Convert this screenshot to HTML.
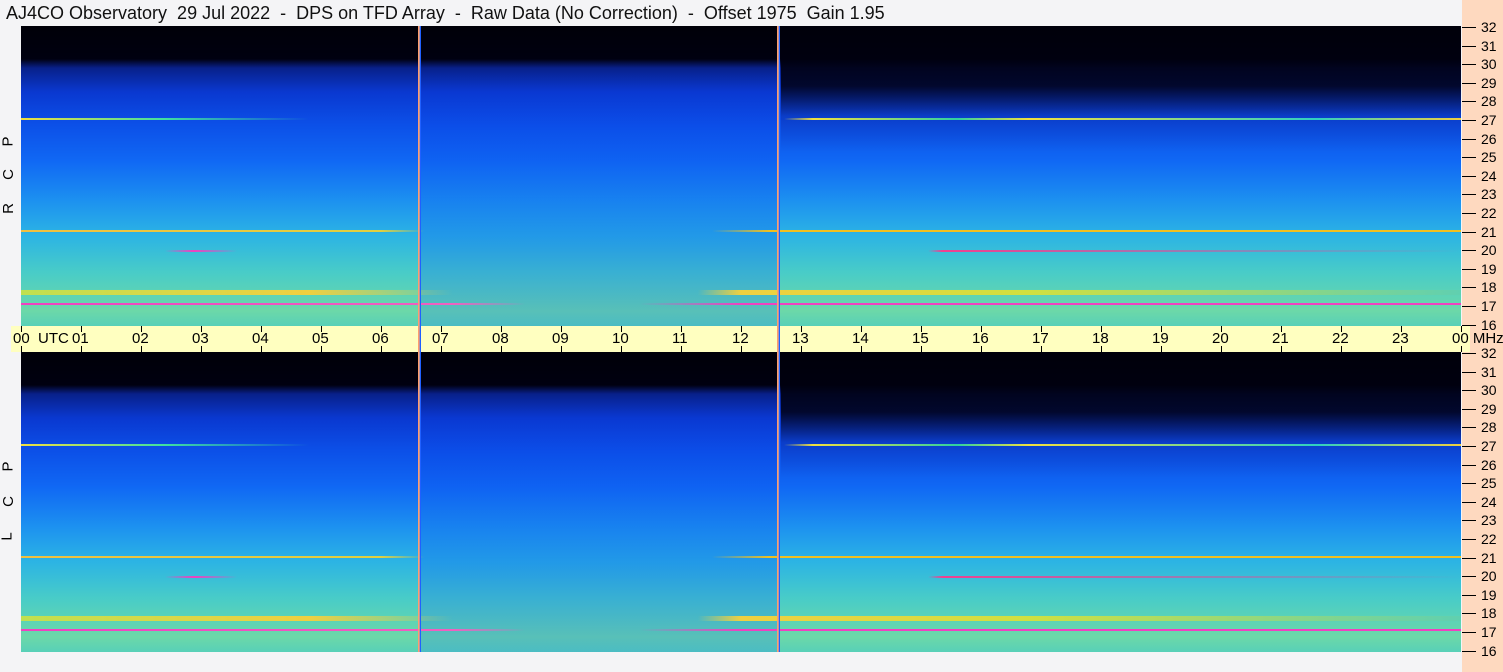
<!DOCTYPE html><html><head><style>
body{margin:0;width:1503px;height:672px;background:#f4f4f6;position:relative;overflow:hidden;font-family:"Liberation Sans",sans-serif}
.t{position:absolute;left:6px;top:3px;font-size:18px;color:#111;white-space:pre}
.pe{position:absolute;left:1462px;top:0;width:41px;height:672px;background:#fed9bf}
.p{position:absolute;left:21px;width:1440px;height:300px;overflow:hidden;
background:linear-gradient(180deg,#000008 0,#000010 11%,#08208a 14%,#0a38d0 22%,#0c50e8 33%,#1068f4 45%,#1c90f0 58%,#2cb4e4 70%,#48ccc8 82%,#6cd8a8 95%,#58d0b8 100%)}
.ov{position:absolute;top:0;height:100%}
.l{position:absolute;left:0;width:100%;height:2px}
.vl{position:absolute;top:26px;width:3px;height:626px;background:linear-gradient(90deg,#ff9060,#ffb080 40%,#2060ff 70%)}
.band{position:absolute;left:11px;top:326px;width:1459px;height:26px;background:#ffffc0}
.tk{position:absolute;font-size:15px;color:#000;top:330px;white-space:pre}
.f{position:absolute;left:1481px;font-size:14px;color:#000}
.fm{position:absolute;left:1462px;width:14px;height:1px;background:#000}
.lb{position:absolute;left:3px;font-size:15px;transform:rotate(-90deg)}
</style></head><body>
<div class="t">AJ4CO Observatory  29 Jul 2022  -  DPS on TFD Array  -  Raw Data (No Correction)  -  Offset 1975  Gain 1.95</div>
<div class="pe"></div>
<div class="p" style="top:26px">
 <div class="ov" style="left:398px;width:360px;background:linear-gradient(180deg,transparent 14%,rgba(10,60,230,.15) 30%,rgba(10,90,240,.3) 70%,rgba(20,110,240,.2) 100%)"></div>
 <div class="ov" style="left:760px;width:680px;background:linear-gradient(180deg,rgba(0,0,10,.95) 0,rgba(0,0,20,.85) 20%,rgba(10,30,140,.3) 30%,transparent 42%)"></div>
 <div class="l" style="top:92px;background:linear-gradient(90deg,#f0e040 0,#40e0a0 10%,transparent 20%,transparent 53%,#f0e040 55%,#30d0a0 65%,#f0e040 70%,#30d0c0 90%,#f0d040 100%)"></div>
 <div class="l" style="top:204px;background:linear-gradient(90deg,#f0c040 0,#e0d040 25%,transparent 28%,transparent 48%,#f0c020 52%,#f0c020 100%)"></div>
 <div class="l" style="top:224px;background:linear-gradient(90deg,transparent 10%,#f040c0 12%,transparent 15%,transparent 63%,#f04090 64%,transparent 100%)"></div>
 <div class="l" style="top:264px;height:5px;background:linear-gradient(90deg,#c0e050 0,#f0d040 20%,transparent 30%,transparent 47%,#f0d040 50%,#d0e040 70%,#60d0b0 100%)"></div>
 <div class="l" style="top:277px;background:linear-gradient(90deg,#f040c0 0,#f060c0 30%,transparent 35%,transparent 43%,#f040c0 50%,#f040c0 100%)"></div>
</div>
<div class="p" style="top:352px">
 <div class="ov" style="left:398px;width:360px;background:linear-gradient(180deg,transparent 14%,rgba(10,60,230,.15) 30%,rgba(10,90,240,.3) 70%,rgba(20,110,240,.2) 100%)"></div>
 <div class="ov" style="left:760px;width:680px;background:linear-gradient(180deg,rgba(0,0,10,.95) 0,rgba(0,0,20,.85) 20%,rgba(10,30,140,.3) 30%,transparent 42%)"></div>
 <div class="l" style="top:92px;background:linear-gradient(90deg,#f0e040 0,#40e0a0 10%,transparent 20%,transparent 53%,#f0e040 55%,#30d0a0 65%,#f0e040 70%,#30d0c0 90%,#f0d040 100%)"></div>
 <div class="l" style="top:204px;background:linear-gradient(90deg,#f0c040 0,#e0d040 25%,transparent 28%,transparent 48%,#f0c020 52%,#f0c020 100%)"></div>
 <div class="l" style="top:224px;background:linear-gradient(90deg,transparent 10%,#f040c0 12%,transparent 15%,transparent 63%,#f04090 64%,transparent 100%)"></div>
 <div class="l" style="top:264px;height:5px;background:linear-gradient(90deg,#c0e050 0,#f0d040 20%,transparent 30%,transparent 47%,#f0d040 50%,#d0e040 70%,#60d0b0 100%)"></div>
 <div class="l" style="top:277px;background:linear-gradient(90deg,#f040c0 0,#f060c0 30%,transparent 35%,transparent 43%,#f040c0 50%,#f040c0 100%)"></div>
</div>
<div class="band"></div>
<div class="vl" style="left:418px"></div><div class="vl" style="left:777px"></div>
<div class="lb" style="top:133px">P</div><div class="lb" style="top:166px">C</div><div class="lb" style="top:200px">R</div>
<div class="lb" style="top:458px">P</div><div class="lb" style="top:493px">C</div><div class="lb" style="top:528px">L</div>
<div id="ax"></div>
<script>
var h='';var lab=['00','01','02','03','04','05','06','07','08','09','10','11','12','13','14','15','16','17','18','19','20','21','22','23','00'];
for(var i=0;i<25;i++){var x=21+i*60;h+='<div style="position:absolute;left:'+x+'px;top:326px;width:1px;height:6px;background:#000"></div><div style="position:absolute;left:'+x+'px;top:346px;width:1px;height:6px;background:#000"></div>';
var t=lab[i];if(i==0)t='00  UTC';if(i==24)t='00 MHz';h+='<div class="tk" style="left:'+(i==0?13:x-9)+'px">'+t+'</div>';}
for(var p=0;p<2;p++){var y0=p?352:26;for(var m=32;m>=16;m--){var y=y0+1+(32-m)*18.6;h+='<div class="fm" style="top:'+Math.round(y)+'px"></div><div class="f" style="top:'+Math.round(y-8)+'px">'+m+'</div>';}}
document.getElementById('ax').innerHTML=h;
</script>
</body></html>
